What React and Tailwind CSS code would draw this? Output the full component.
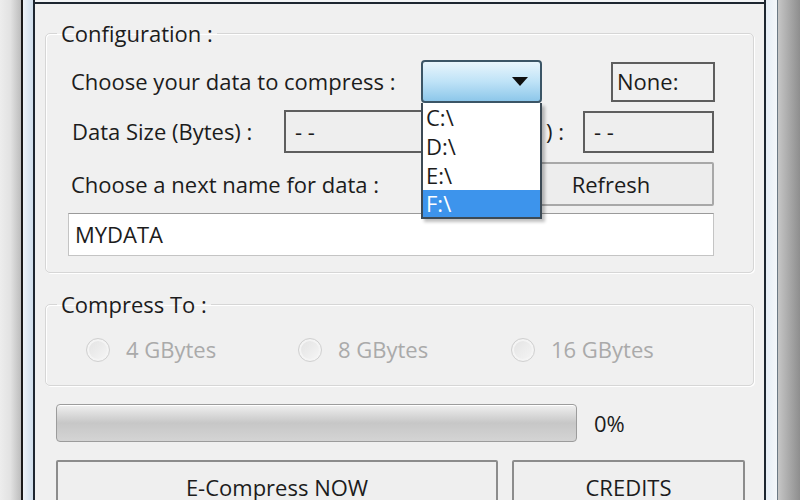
import React from "react";

const font = { fontFamily: '"Open Sans", "Noto Sans", sans-serif' };

function Radio({ label }) {
  return (
    <div className="flex items-center">
      <div className="w-[24px] h-[24px] rounded-full border border-[#d0d0d0] bg-gradient-to-br from-[#e2e2e2] to-[#f6f6f6] shadow-[inset_0_0_0_2px_#f4f4f4]" />
      <span className="ml-[16px] text-[#aaaaaa]">{label}</span>
    </div>
  );
}

export default function App() {
  return (
    <div
      className="w-[800px] h-[500px] flex overflow-hidden text-[22px] text-[#1c1c1c] bg-[#f0f0f0]"
      style={font}
    >
      {/* left outside */}
      <div className="w-[21px] h-full shrink-0 bg-gradient-to-r from-[#ededed] via-[#e2e2e2] to-[#bdbdbd]" />
      {/* left frame */}
      <div className="w-[2px] h-full shrink-0 bg-[#1b1b1b]" />
      <div className="w-[10px] h-full shrink-0 bg-gradient-to-r from-[#eef3f8] to-[#cfdeec]" />
      {/* main form */}
      <div className="w-[733px] shrink-0 h-full flex flex-col border-l-2 border-r-2 border-[#1d2630] bg-[#f0f0f0]">
        <div className="h-[2px] shrink-0 bg-[#f2f4f6]" />
        <div className="h-[2px] shrink-0 bg-[#1d2630]" />
        <div className="flex-1 flex flex-col px-[10px] bg-[#f0f0f0]">
          {/* Configuration group */}
          <fieldset className="shrink-0 mt-[14px] border border-[#d6d6d6] rounded-[5px] shadow-[inset_1px_1px_0_#ffffff,1px_1px_0_#ffffff] pl-[22px] pr-[38px] pt-[12px] pb-[14px] h-[255px]">
            <legend className="-ml-[11px] px-[4px] leading-[30px]">Configuration :</legend>
            {/* row 1 */}
            <div className="flex items-center h-[43px]">
              <div className="w-[353px] pl-[3px]">Choose your data to compress :</div>
              <div className="relative w-[121px] h-[43px]">
                <div className="w-full h-full rounded-[4px] border-2 border-[#3b5566] bg-gradient-to-b from-[#e8f5fc] via-[#bfe3f7] to-[#8dc7ea] flex items-center justify-end pr-[12px]">
                  <svg width="16" height="9" viewBox="0 0 16 9">
                    <path d="M0 0 L16 0 L8 9 Z" fill="#0f0f0f" />
                  </svg>
                </div>
                {/* dropdown list overlay */}
                <div className="absolute left-0 top-full z-10 w-[121px] bg-white border-x-2 border-b-2 border-[#3c4a55] shadow-[3px_3px_3px_rgba(0,0,0,0.25)] flex flex-col">
                  <div className="h-[29px] leading-[29px] pl-[3px]">C:\</div>
                  <div className="h-[29px] leading-[29px] pl-[3px]">D:\</div>
                  <div className="h-[29px] leading-[29px] pl-[3px]">E:\</div>
                  <div className="h-[27px] leading-[27px] pl-[3px] bg-[#3d94ec] text-white">F:\</div>
                </div>
              </div>
              <div className="ml-[69px] w-[104px] h-[40px] border-2 border-[#5e5e5e] bg-[#f0f0f0] flex items-center pl-[4px]">
                None:
              </div>
            </div>
            {/* row 2 */}
            <div className="flex items-center h-[43px] mt-[7px]">
              <div className="w-[216px] pl-[4px]">Data Size (Bytes) :</div>
              <div className="w-[230px] h-[43px] border-2 border-[#5e5e5e] bg-[#eeeeee] flex items-center pl-[9px]">
                - -
              </div>
              <div className="w-[50px] flex justify-end">) :</div>
              <div className="ml-[19px] w-[131px] h-[42px] border-2 border-[#5e5e5e] bg-[#eeeeee] flex items-center pl-[9px]">
                - -
              </div>
            </div>
            {/* row 3 */}
            <div className="flex items-center h-[44px] mt-[9px]">
              <div className="w-[440px] pl-[3px]">Choose a next name for data :</div>
              <div className="w-[206px] h-[44px] border-2 border-[#a8a8a8] rounded-[2px] bg-[#ededed] flex items-center justify-center">
                Refresh
              </div>
            </div>
            {/* row 4 */}
            <div className="mt-[7px] w-[646px] h-[43px] border border-[#c4c4c4] border-t-[#9a9a9a] bg-white flex items-center pl-[6px]">
              MYDATA
            </div>
          </fieldset>
          {/* Compress To group */}
          <fieldset className="shrink-0 mt-[16px] border border-[#d6d6d6] rounded-[5px] shadow-[inset_1px_1px_0_#ffffff,1px_1px_0_#ffffff] pl-[40px] pt-[14px] h-[97px]">
            <legend className="-ml-[29px] px-[4px] leading-[30px]">Compress To :</legend>
            <div className="flex items-center">
              <div className="w-[212px]"><Radio label="4 GBytes" /></div>
              <div className="w-[213px]"><Radio label="8 GBytes" /></div>
              <div><Radio label="16 GBytes" /></div>
            </div>
          </fieldset>
          {/* progress */}
          <div className="shrink-0 flex items-center mt-[18px] pl-[11px]">
            <div className="w-[521px] h-[38px] rounded-[4px] border border-[#9c9c9c] bg-gradient-to-b from-[#f0f0f0] via-[#c7c7c7] to-[#d4d4d4] shadow-[inset_0_1px_0_#ffffff]" />
            <div className="ml-[17px]">0%</div>
          </div>
          {/* buttons */}
          <div className="shrink-0 flex mt-[18px] pl-[11px]">
            <div className="w-[442px] h-[54px] border-2 border-[#8c8c8c] rounded-[2px] bg-[#efefef] flex items-center justify-center">
              E-Compress NOW
            </div>
            <div className="ml-[14px] w-[233px] h-[54px] border-2 border-[#8c8c8c] rounded-[2px] bg-[#efefef] flex items-center justify-center">
              CREDITS
            </div>
          </div>
        </div>
      </div>
      {/* right frame */}
      <div className="w-[11px] h-full shrink-0 bg-gradient-to-r from-[#e6eef6] to-[#f4f7fa]" />
      <div className="w-[1px] h-full shrink-0 bg-[#6c7a86]" />
      <div className="flex-1 h-full bg-gradient-to-r from-[#c6c6c6] to-[#8e8e8e]" />
    </div>
  );
}
